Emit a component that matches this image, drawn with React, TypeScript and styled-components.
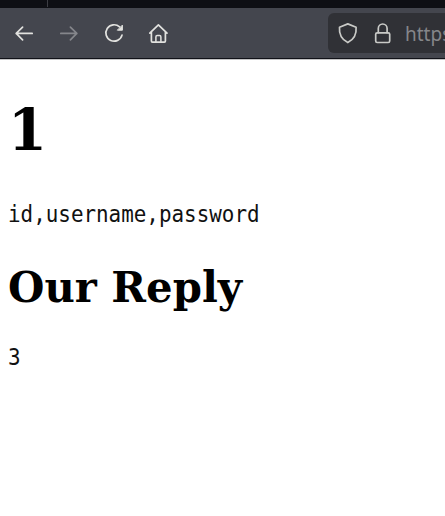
import React from 'react';
import styled, { createGlobalStyle } from 'styled-components';

const GlobalStyle = createGlobalStyle`
  html, body { margin: 0; background: #fff; overflow: hidden; }
  * { box-sizing: border-box; }
`;

const Browser = styled.div`
  display: flex;
  flex-direction: column;
  width: 100%;
  height: 516px;
  overflow: hidden;
  background: #fff;
`;

const TabStrip = styled.div`
  flex: none;
  height: 8px;
  padding-left: 47px;
  background: #0e0f14;
`;

const TabDivider = styled.div`
  width: 1px;
  height: 7px;
  background: #3c3d43;
`;

const Toolbar = styled.header`
  display: flex;
  flex: none;
  justify-content: space-between;
  height: 51px;
  padding: 5px 0 5px 12px;
  background: #44464e;
  border-bottom: 1px solid #111218;
  box-shadow: 0 1px 0 #c4c4c5;
`;

const NavButtons = styled.nav`
  display: flex;
  align-items: center;
  gap: 21px;
`;

const NavButton = styled.button<{ $dim?: boolean }>`
  display: flex;
  width: 24px;
  height: 24px;
  padding: 0;
  border: 0;
  background: none;
  color: ${(p) => (p.$dim ? '#85868b' : '#e2e2df')};
`;

const AddressBar = styled.div`
  display: flex;
  align-items: center;
  gap: 11px;
  flex: none;
  width: 117px;
  height: 40px;
  padding-left: 8px;
  border-radius: 6px 0 0 6px;
  background: #303136;
  color: #c9cac7;
  overflow: hidden;
`;

const Url = styled.span`
  margin: 2px 0 0 -1px;
  font: 19px/24px 'Noto Sans', sans-serif;
  color: #85868a;
`;

const Page = styled.main`
  padding: 36px 8px 0;
  color: #000;
`;

const Heading = styled.h1`
  margin: 0;
  font: bold 56px/68px 'DejaVu Serif', serif;
  transform: scaleY(1.03);
`;

const SubHeading = styled.h2`
  margin: 35px 0 0;
  font: bold 41.8px/52px 'DejaVu Serif', serif;
  transform: scaleY(1.02);
`;

const Output = styled.pre<{ $gap: number }>`
  margin: ${(p) => p.$gap}px 0 0;
  font: 20.9px/24px 'DejaVu Sans Mono', monospace;
  color: #111;
  transform: scaleY(1.06);
`;

const GlyphSvg = styled.svg`
  flex: none;
  width: 24px;
  height: 24px;
`;

const Glyph = ({ children }: { children: React.ReactNode }) => (
  <GlyphSvg viewBox="0 0 24 24" fill="none" stroke="currentColor"
    strokeWidth="1.7" strokeLinecap="round" strokeLinejoin="round">
    {children}
  </GlyphSvg>
);

export default function App() {
  return (
    <>
      <GlobalStyle />
      <Browser>
        <TabStrip><TabDivider /></TabStrip>
        <Toolbar>
          <NavButtons>
            <NavButton aria-label="Back">
              <Glyph><path d="M20.2 12.4H4.2M10.6 6.2L4.2 12.4l6.4 6.4" /></Glyph>
            </NavButton>
            <NavButton aria-label="Forward" $dim>
              <Glyph><path d="M3.8 12.4h16M13.4 6.2L19.8 12.4l-6.4 6.4" /></Glyph>
            </NavButton>
            <NavButton aria-label="Reload">
              <Glyph>
                <path d="M20 14.1A8.2 8.2 0 1 1 17.6 5.9" />
                <path d="M20.4 4.5V9.2H15.7Z" fill="currentColor" strokeWidth="1" />
              </Glyph>
            </NavButton>
            <NavButton aria-label="Home">
              <Glyph>
                <path d="M2.8 12.1L11.4 3.9l8.6 8.2M4.4 10.8V20.1q0 1 1 1h12q1 0 1-1V10.8" />
                <path d="M8.9 20.6V15.9q0-1.3 1.3-1.3h2.4q1.3 0 1.3 1.3v4.7" strokeWidth="1.5" />
              </Glyph>
            </NavButton>
          </NavButtons>
          <AddressBar>
            <Glyph>
              <path d="M11.8 2.9L20.1 6.3C20.7 13 18.2 18.2 11.8 21.6C5.4 18.2 2.9 13 3.5 6.3Z" />
            </Glyph>
            <Glyph>
              <rect x="4.7" y="11.8" width="14" height="9.7" rx="1.5" />
              <path d="M7.3 11.6V7.4a4.4 4.4 0 0 1 8.8 0V11.6" />
            </Glyph>
            <Url>https</Url>
          </AddressBar>
        </Toolbar>
        <Page>
          <Heading>1</Heading>
          <Output $gap={40}>id,username,password</Output>
          <SubHeading>Our Reply</SubHeading>
          <Output $gap={32}>3</Output>
        </Page>
      </Browser>
    </>
  );
}
